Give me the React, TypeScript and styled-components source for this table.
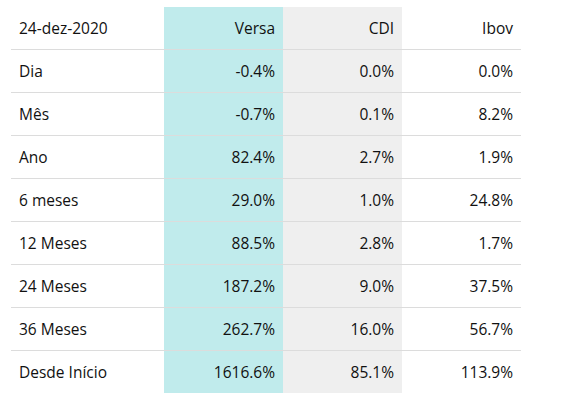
import React from "react";
import styled, { createGlobalStyle } from "styled-components";

const Global = createGlobalStyle`
  html, body { margin: 0; padding: 0; background: #ffffff; }
  body { font-family: "Open Sans", "Noto Sans", sans-serif; color: #111111; }
`;

const Wrap = styled.div`
  padding: 7px 0 0 11px;
`;

const Table = styled.table`
  border-collapse: separate;
  border-spacing: 0;
  table-layout: fixed;
  width: 510px;
  font-size: 15.5px;
`;

const Row = styled.tr``;

const Cell = styled.td<{ $bg?: string; $label?: boolean; $last?: boolean }>`
  box-sizing: border-box;
  height: ${(p) => (p.$last ? "42px" : "43px")};
  padding: 0 8px;
  text-align: ${(p) => (p.$label ? "left" : "right")};
  background: ${(p) => p.$bg ?? "transparent"};
  border-bottom: ${(p) => (p.$last ? "none" : "1px solid #dcdcdc")};
  white-space: nowrap;
  vertical-align: middle;
`;

const bgs = [undefined, "#c0ebec", "#efefef", undefined];
const widths = [153, 119, 119, 119];

const rows: string[][] = [
  ["24-dez-2020", "Versa", "CDI", "Ibov"],
  ["Dia", "-0.4%", "0.0%", "0.0%"],
  ["Mês", "-0.7%", "0.1%", "8.2%"],
  ["Ano", "82.4%", "2.7%", "1.9%"],
  ["6 meses", "29.0%", "1.0%", "24.8%"],
  ["12 Meses", "88.5%", "2.8%", "1.7%"],
  ["24 Meses", "187.2%", "9.0%", "37.5%"],
  ["36 Meses", "262.7%", "16.0%", "56.7%"],
  ["Desde Início", "1616.6%", "85.1%", "113.9%"],
];

export default function App() {
  return (
    <Wrap>
      <Global />
      <Table>
        <colgroup>
          {widths.map((w, i) => (
            <col key={i} style={{ width: w }} />
          ))}
        </colgroup>
        <tbody>
          {rows.map((r, ri) => (
            <Row key={ri}>
              {r.map((v, ci) => (
                <Cell
                  key={ci}
                  $label={ci === 0}
                  $bg={bgs[ci]}
                  $last={ri === rows.length - 1}
                >
                  {v}
                </Cell>
              ))}
            </Row>
          ))}
        </tbody>
      </Table>
    </Wrap>
  );
}
